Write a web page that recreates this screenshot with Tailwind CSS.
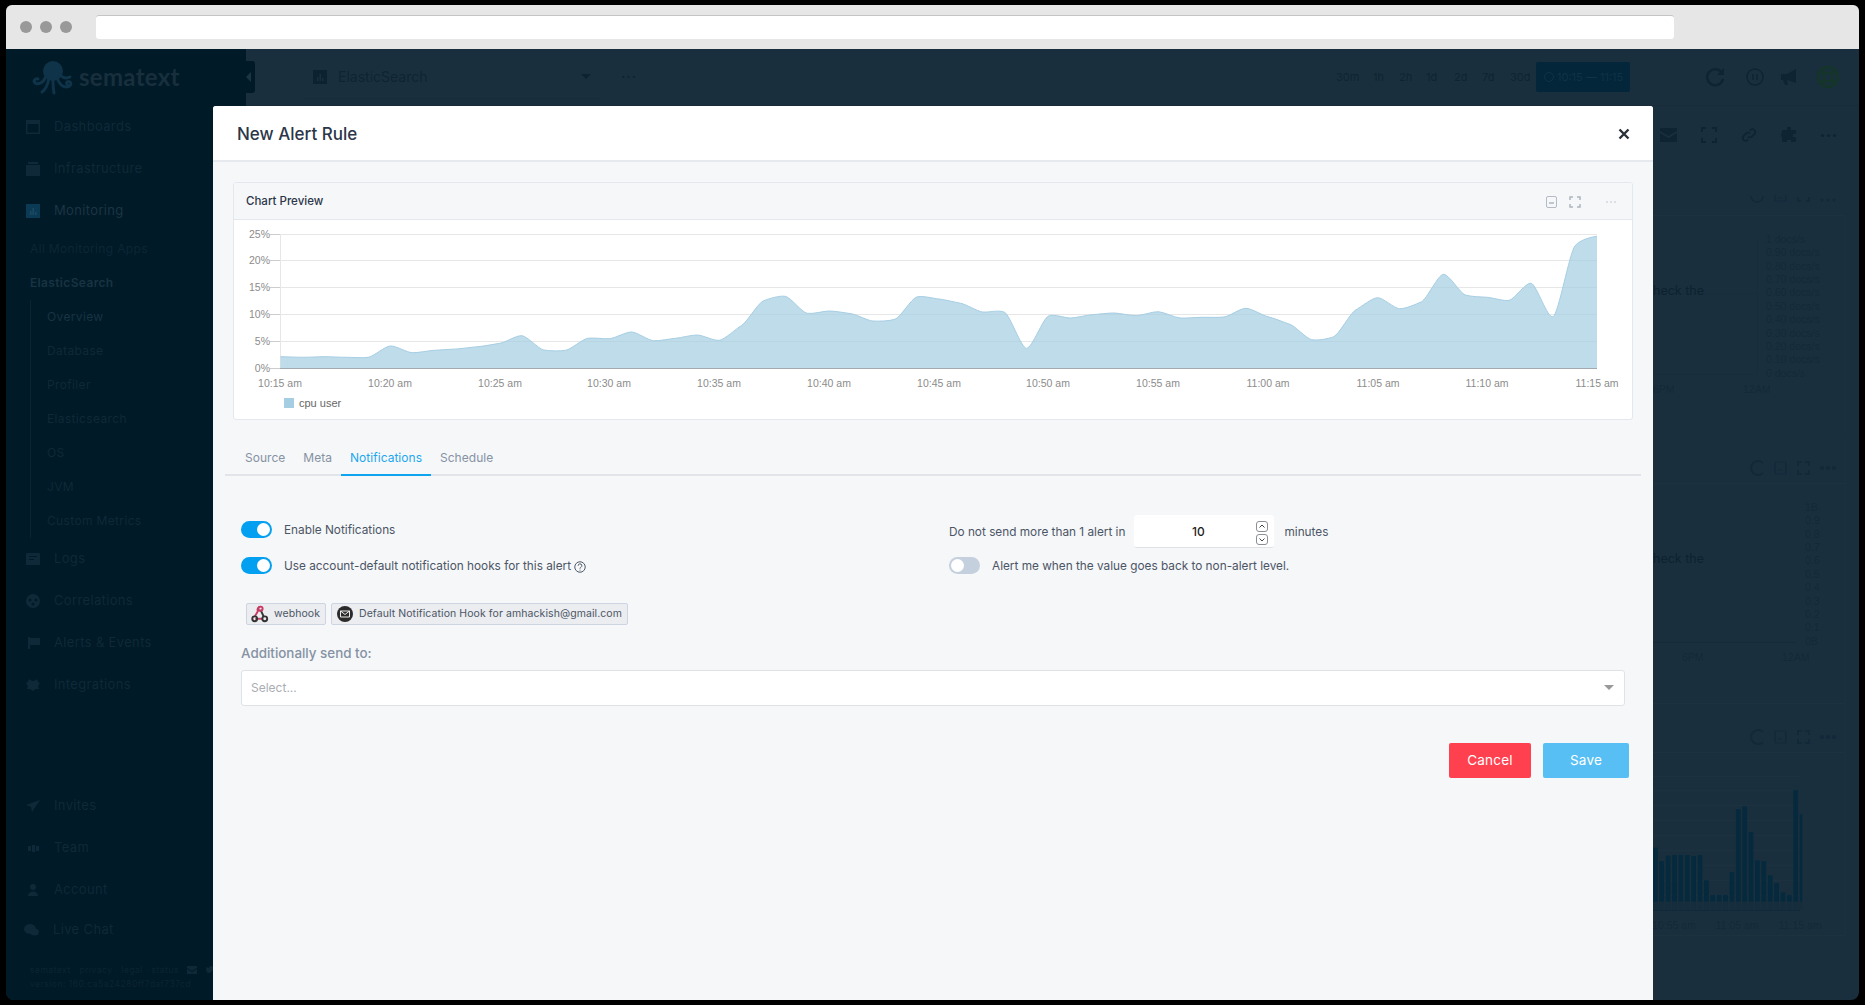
<!DOCTYPE html>
<html lang="en">
<head>
  <meta charset="UTF-8">
  <title>New Alert Rule</title>
  <script src="https://cdn.jsdelivr.net/npm/@tailwindcss/browser@4"></script>
</head>
<body class="h-screen overflow-hidden bg-black pt-[5px] pl-[6px] font-['Inter',sans-serif]">
  <div class="relative flex h-[995px] w-[1853px] flex-col overflow-hidden rounded-t-[6px] rounded-b-[8px] bg-[#1a2f3d]">

    <!-- browser chrome -->
    <div class="flex h-[44px] shrink-0 items-center bg-[#e6e6e6] pl-[14px]">
      <span class="h-[12px] w-[12px] rounded-full bg-[#999999]"></span>
      <span class="ml-[8px] h-[12px] w-[12px] rounded-full bg-[#999999]"></span>
      <span class="ml-[8px] h-[12px] w-[12px] rounded-full bg-[#999999]"></span>
      <div class="ml-[24px] h-[24px] w-[1578px] rounded-[3px] border-t border-[#c4c4c4] bg-white"></div>
    </div>

    <div class="flex flex-1">
      <!-- sidebar, dimmed behind the modal -->
      <aside class="relative flex w-[240px] shrink-0 flex-col bg-[#011a27] text-[13px] tracking-[0.35px] text-[#0f2938]">
        <div class="flex h-[57px] items-center pl-[24px]">
          <svg class="h-[34px] w-[46px]" viewBox="0 0 46 34" fill="none" stroke="#0f3348" stroke-width="3" stroke-linecap="round">
            <ellipse cx="23" cy="10" rx="10" ry="10" fill="#0f3348" stroke="none"/>
            <path d="M16 15c-2 7-8 9-11 7-2-2 0-5 3-4"/>
            <path d="M19 17c-1 6-3 11-7 14"/>
            <path d="M23 18c0 5 0 9 1 14"/>
            <path d="M27 17c2 5 5 9 9 9 4 0 6-3 4-5-2-1-4 0-3 2"/>
            <path d="M30 14c3 3 6 4 10 2"/>
          </svg>
          <span class="ml-[3px] -mt-[2px] font-['Lato',sans-serif] text-[24px] font-bold tracking-[0.3px] text-[#182f3d]">sematext</span>
        </div>
        <span class="absolute top-[12px] left-[240px] flex h-[32px] w-[9px] items-center rounded-r-[3px] bg-[#011a27]">
          <span class="h-0 w-0 border-y-[5px] border-r-[5px] border-y-transparent border-r-[#1c3544]"></span>
        </span>

        <div class="flex h-[42px] items-center pl-[20px]">
          <svg class="mr-[14px] h-[14px] w-[14px]" viewBox="0 0 14 14"><path fill="#0f2938" d="M0 0h14v14H0zM1.500 4v8.500h11V4z"/></svg>Dashboards
        </div>
        <div class="flex h-[42px] items-center pl-[20px]">
          <svg class="mr-[14px] h-[14px] w-[14px]" viewBox="0 0 14 14"><path fill="#0f2938" d="M2 0h10v2H2zM0 3h14v11H0z"/></svg>Infrastructure
        </div>
        <div class="flex h-[42px] items-center pl-[20px] text-[#1a3545]">
          <svg class="mr-[14px] h-[14px] w-[14px]" viewBox="0 0 14 14"><path fill="#0b3a55" d="M0 0h14v14H0z"/><path fill="#1d4a63" d="M4 7h1.500v4H4zM6.500 4H8v7H6.500zM9 8h1.500v3H9z"/></svg>Monitoring
        </div>

        <div class="pl-[24px] text-[12px]">
          <div class="flex h-[34px] items-center text-[#0d2635]">All Monitoring Apps</div>
          <div class="flex h-[34px] items-center font-semibold text-[#183343]">ElasticSearch</div>
          <div class="border-l border-[#0b2432] pl-[16px]">
            <div class="flex h-[34px] items-center text-[#183343]">Overview</div>
            <div class="flex h-[34px] items-center">Database</div>
            <div class="flex h-[34px] items-center">Profiler</div>
            <div class="flex h-[34px] items-center">Elasticsearch</div>
            <div class="flex h-[34px] items-center">OS</div>
            <div class="flex h-[34px] items-center">JVM</div>
            <div class="flex h-[34px] items-center">Custom Metrics</div>
          </div>
        </div>

        <div class="flex h-[42px] items-center pl-[20px]">
          <svg class="mr-[14px] h-[14px] w-[14px]" viewBox="0 0 14 14"><path fill="#0f2938" fill-rule="evenodd" d="M1 1h12a1 1 0 0 1 1 1v10a1 1 0 0 1-1 1H1a1 1 0 0 1-1-1V2a1 1 0 0 1 1-1zM3 4v1h8V4zM3 7v1h5V7z"/></svg>Logs
        </div>
        <div class="flex h-[42px] items-center pl-[20px]">
          <svg class="mr-[14px] h-[14px] w-[14px]" viewBox="0 0 14 14"><path fill="#0f2938" fill-rule="evenodd" d="M7 0a7 7 0 1 1 0 14A7 7 0 0 1 7 0zM4 4.500a1.500 1.500 0 1 0 0 3 1.500 1.500 0 0 0 0-3zM10 4.500a1.500 1.500 0 1 0 0 3 1.500 1.500 0 0 0 0-3zM7 8.500a1.500 1.500 0 1 0 0 3 1.500 1.500 0 0 0 0-3z"/></svg>Correlations
        </div>
        <div class="flex h-[42px] items-center pl-[20px]">
          <svg class="mr-[14px] h-[14px] w-[14px]" viewBox="0 0 14 14"><path fill="#0f2938" d="M2 1h2v1h10v7H4v4H2z"/></svg>Alerts &amp; Events
        </div>
        <div class="flex h-[42px] items-center pl-[20px]">
          <svg class="mr-[14px] h-[14px] w-[14px]" viewBox="0 0 14 14"><path fill="#0f2938" d="M3 1l3 2h2l3-2 1 3 2 1-2 3 1 3-3 0-3 2-3-2-3 0 1-3-2-3 2-1z"/></svg>Integrations
        </div>

        <div class="h-[79px]"></div>

        <div class="flex h-[42px] items-center pl-[20px]">
          <svg class="mr-[14px] h-[14px] w-[14px]" viewBox="0 0 14 14"><path fill="#0f2938" d="M14 1L6 13 5 8 0 6z"/></svg>Invites
        </div>
        <div class="flex h-[42px] items-center pl-[20px]">
          <svg class="mr-[14px] h-[14px] w-[14px]" viewBox="0 0 14 14"><path fill="#0f2938" d="M2 5h3v5H2zM6 4h3v7H6zM10 5h3v5h-3z"/></svg>Team
        </div>
        <div class="flex h-[42px] items-center pl-[20px]">
          <svg class="mr-[14px] h-[14px] w-[14px]" viewBox="0 0 14 14"><circle cx="7" cy="4" r="3" fill="#0f2938"/><path fill="#0f2938" d="M2 13c0-6 10-6 10 0z"/></svg>Account
        </div>
        <div class="flex h-[38px] items-center pl-[18px]">
          <svg class="mr-[14px] h-[14px] w-[15px]" viewBox="0 0 15 14"><ellipse cx="6" cy="6" rx="6" ry="5" fill="#0f2938"/><ellipse cx="10.500" cy="9" rx="4.500" ry="3.500" fill="#0f2938"/></svg>Live Chat
        </div>

        <div class="mt-[14px] pl-[24px] text-[8.5px] leading-[14px] tracking-[0.5px] text-[#0c2534]">
          <div class="flex items-center">sematext · privacy · legal · status
            <svg class="ml-[8px] h-[8px] w-[10px]" viewBox="0 0 10 8"><path fill="#0f2938" d="M0 0h10v2L5 5 0 2zM0 3l5 3 5-3v5H0z"/></svg>
            <svg class="ml-[8px] h-[8px] w-[9px]" viewBox="0 0 9 8"><path fill="#0f2938" d="M0 6c3 2 8 1 8-4l1-1-1 0c-1-2-4-1-4 1C3 2 1 1 1 1c0 2 0 3 1 3L1 4c0 1 1 2 2 2-1 .5-2 .5-3 0z"/></svg>
          </div>
          <div>version: 160:ca5a24280ff7daf737cd</div>
        </div>
      </aside>

      <!-- page behind the modal -->
      <main class="flex min-w-0 flex-1 flex-col">
        <header class="flex h-[57px] shrink-0 items-center border-b border-[#172b38] text-[#0e2433]">
          <div class="ml-[59px] flex h-[44px] w-[295px] items-center border-b border-[#172b38] pl-[8px] text-[13px]">
            <svg class="h-[14px] w-[14px]" viewBox="0 0 14 14"><path fill="#0c2230" d="M0 0h14v14H0z"/><path fill="#1a2f3d" d="M4 7h1.500v4H4zM6.500 4H8v7H6.500zM9 8h1.500v3H9z"/></svg>
            <span class="ml-[11px] text-[14px]">ElasticSearch</span>
            <span class="ml-auto mr-[9px] h-0 w-0 border-x-[5px] border-t-[5px] border-x-transparent border-t-[#0c2230]"></span>
          </div>
          <span class="ml-[21px] text-[13px] font-bold tracking-[1px]">···</span>
          <div class="ml-[699px] flex h-[30px] w-[294px] items-center text-[11px]">
            <span class="w-[37px]">30m</span>
            <span class="w-[26px]">1h</span>
            <span class="w-[27px]">2h</span>
            <span class="w-[28px]">1d</span>
            <span class="w-[28px]">2d</span>
            <span class="w-[28px]">7d</span>
            <span class="w-[26px]">30d</span>
            <span class="flex h-[30px] w-[94px] items-center rounded-[2px] bg-[#03263a] pl-[8px] text-[#0f3347]">
              <span class="mr-[3px] h-[10px] w-[10px] rounded-full border border-[#0f3347]"></span>10:15 — 11:15
            </span>
          </div>
          <svg class="ml-[75px] h-[20px] w-[20px]" viewBox="0 0 20 20" fill="none" stroke="#0e2433" stroke-width="2.500"><path d="M17 6a8 8 0 1 0 1 6"/><path fill="#0e2433" stroke="none" d="M19 1v7h-7z"/></svg>
          <svg class="ml-[21px] h-[18px] w-[18px]" viewBox="0 0 18 18" fill="none" stroke="#0e2433" stroke-width="1.500"><circle cx="9" cy="9" r="8"/><path d="M7 6v6M11 6v6"/></svg>
          <svg class="ml-[15px] h-[18px] w-[18px]" viewBox="0 0 18 18"><path fill="#0e2433" d="M17 1v14L8 12H2V6h6z"/><path fill="#0e2433" d="M4 12h4l1 5H6z"/></svg>
          <svg class="ml-[18px] h-[26px] w-[26px]" viewBox="0 0 26 26" fill="none" stroke="#16352a" stroke-width="2.500"><circle cx="13" cy="13" r="10"/><path d="M3 9h20M3 17h20M9 3v20M17 3v20"/></svg>
        </header>

        <div class="flex h-[54px] shrink-0 items-center justify-end gap-[24px] pr-[22px] pt-[4px]">
          <svg class="h-[14px] w-[17px]" viewBox="0 0 17 14"><path fill="#0e2433" d="M0 0h17v3l-8.500 5L0 3zM0 5l8.500 5L17 5v9H0z"/></svg>
          <svg class="h-[16px] w-[16px]" viewBox="0 0 16 16" fill="none" stroke="#0e2433" stroke-width="2"><path d="M1 5V1h4M11 1h4v4M15 11v4h-4M5 15H1v-4"/></svg>
          <svg class="h-[16px] w-[16px]" viewBox="0 0 16 16" fill="none" stroke="#0e2433" stroke-width="1.800"><path d="M7 9.500a3 3 0 0 0 4 0l3-3a3 3 0 0 0-4-4L9 3.500M9 6.500a3 3 0 0 0-4 0l-3 3a3 3 0 0 0 4 4l1-1"/></svg>
          <svg class="h-[16px] w-[16px]" viewBox="0 0 16 16"><path fill="#0e2433" d="M6 0h4v3h5v4h-3v3h3v5h-5v-2H6v2H1v-5H0V6h1V3h5z"/></svg>
          <span class="flex w-[16px] gap-[3px]">
            <span class="h-[3px] w-[3px] rounded-full bg-[#0e2433]"></span>
            <span class="h-[3px] w-[3px] rounded-full bg-[#0e2433]"></span>
            <span class="h-[3px] w-[3px] rounded-full bg-[#0e2433]"></span>
          </span>
        </div>

        <!-- widget strip on the right, the rest is hidden by the modal -->
        <div class="flex flex-1 flex-col items-end">
          <svg class="block h-[280px] w-[206px] shrink-0" viewBox="1653 160 206 280" font-family="'Liberation Sans',sans-serif" font-size="10.500" fill="#12293a">
            <path d="M1653 215.500H1845M1845 215v220" stroke="#1c323f" fill="none"/>
            <path d="M1757.500 240V374M1653 293.500h104M1653 374.500h104" stroke="#182d3a" fill="none"/>
            <path d="M1751 196a6 6 0 0 0 12 0" stroke="#12293a" stroke-width="1.500" fill="none"/>
            <path d="M1775 195v6h11v-6M1778 198h5" stroke="#12293a" stroke-width="1.200" fill="none"/>
            <path d="M1798 197v4h3M1809 197v4h-3" stroke="#12293a" stroke-width="2" fill="none"/>
            <circle cx="1822" cy="200" r="1.500"/><circle cx="1828" cy="200" r="1.500"/><circle cx="1834" cy="200" r="1.500"/>
            <text x="1766" y="243">1 docs/s</text>
            <text x="1766" y="256">0.90 docs/s</text>
            <text x="1766" y="270">0.80 docs/s</text>
            <text x="1766" y="283">0.70 docs/s</text>
            <text x="1766" y="296">0.60 docs/s</text>
            <text x="1766" y="310">0.50 docs/s</text>
            <text x="1766" y="323">0.40 docs/s</text>
            <text x="1766" y="337">0.30 docs/s</text>
            <text x="1766" y="350">0.20 docs/s</text>
            <text x="1766" y="363">0.10 docs/s</text>
            <text x="1766" y="377">0 docs/s</text>
            <text x="1653" y="393">6PM</text>
            <text x="1743" y="393">12AM</text>
            <text x="1653" y="295" font-family="Inter,sans-serif" font-size="12.500" fill="#0c2230">heck the</text>
          </svg>
          <svg class="block h-[260px] w-[206px] shrink-0" viewBox="1653 440 206 260" font-family="'Liberation Sans',sans-serif" font-size="10.500" fill="#12293a">
            <path d="M1653 483.500H1845M1845 440v260" stroke="#1c323f" fill="none"/>
            <path d="M1653 642.500h142" stroke="#152a37" fill="none"/>
            <path d="M1763 463a7 7 0 1 0 0 10" stroke="#12293a" stroke-width="2" fill="none"/>
            <rect x="1775" y="462" width="11" height="12" rx="1" stroke="#12293a" stroke-width="1.200" fill="none"/>
            <path d="M1778 470h5" stroke="#12293a"/>
            <path d="M1798 466v-4h4M1805 462h4v4M1809 470v4h-4M1802 474h-4v-4" stroke="#12293a" stroke-width="2" fill="none"/>
            <circle cx="1822" cy="468" r="2"/><circle cx="1828" cy="468" r="2"/><circle cx="1834" cy="468" r="2"/>
            <text x="1805" y="511">1B</text>
            <text x="1805" y="524">0.9</text>
            <text x="1805" y="538">0.8</text>
            <text x="1805" y="551">0.7</text>
            <text x="1805" y="564">0.6</text>
            <text x="1805" y="578">0.5</text>
            <text x="1805" y="591">0.4</text>
            <text x="1805" y="605">0.3</text>
            <text x="1805" y="618">0.2</text>
            <text x="1805" y="631">0.1</text>
            <text x="1805" y="645">0B</text>
            <text x="1682" y="661">6PM</text>
            <text x="1782" y="661">12AM</text>
            <text x="1653" y="563" font-family="Inter,sans-serif" font-size="12.500" fill="#0c2230">heck the</text>
          </svg>
          <svg id="bars" class="block h-[300px] w-[206px] shrink-0" viewBox="1653 700 206 300" font-family="'Liberation Sans',sans-serif" font-size="10.500" fill="#12293a">
            <path d="M1653 703.500H1845M1845 700v235M1653 752.500H1845M1653 935.500H1845" stroke="#1c323f" fill="none"/>
            <path d="M1653 776.500h147M1653 790.500h147M1653 805.500h147M1653 820.500h147M1653 835.500h147M1653 850.500h147M1653 865.500h147M1653 880.500h147M1653 895.500h147" stroke="#1c3240" fill="none"/>
            <path d="M1653 910.500h147" stroke="#12293a" fill="none"/>
            <path d="M1763 732a7 7 0 1 0 0 10" stroke="#12293a" stroke-width="2" fill="none"/>
            <rect x="1775" y="731" width="11" height="12" rx="1" stroke="#12293a" stroke-width="1.200" fill="none"/>
            <path d="M1778 739h5" stroke="#12293a"/>
            <path d="M1798 735v-4h4M1805 731h4v4M1809 739v4h-4M1802 743h-4v-4" stroke="#12293a" stroke-width="2" fill="none"/>
            <circle cx="1822" cy="737" r="2"/><circle cx="1828" cy="737" r="2"/><circle cx="1834" cy="737" r="2"/>
            <text x="1674" y="929" text-anchor="middle">10:55 am</text>
            <text x="1737" y="929" text-anchor="middle">11:05 am</text>
            <text x="1800" y="929" text-anchor="middle">11:15 am</text>
          </svg>
        </div>
      </main>
    </div>

    <!-- modal -->
    <div class="absolute top-[101px] left-[207px] flex h-[894px] w-[1440px] flex-col rounded-t-[3px] bg-[#f6f7f9]">
      <div class="flex h-[56px] shrink-0 items-center justify-between rounded-t-[3px] border-b-2 border-[#e6e9ed] bg-white pl-[24px] pr-[23px]">
        <h1 class="mt-[3px] text-[17px] font-medium text-[#2b3648]">New Alert Rule</h1>
        <svg class="mt-[2px] h-[12px] w-[12px]" viewBox="0 0 12 12" fill="none" stroke="#2b3138" stroke-width="2.400"><path d="M1.500 1.500l9 9M10.500 1.500l-9 9"/></svg>
      </div>

      <!-- chart card -->
      <section class="mx-[20px] mt-[20px] h-[238px] shrink-0 overflow-hidden rounded-[3px] border border-[#e4e8ee] bg-white">
        <div class="flex h-[37px] items-center border-b border-[#e4e8ee] bg-[#f6f7f9] pl-[12px] pr-[12px] pt-[2px]">
          <h2 class="text-[11.500px] font-medium text-[#2b3648]">Chart Preview</h2>
          <svg class="ml-auto h-[12px] w-[11px]" viewBox="0 0 11 12" fill="none" stroke="#b4bac6"><rect x="0.500" y="0.500" width="10" height="11" rx="1.500"/><path d="M3 7h5" stroke="#8d95a3"/></svg>
          <svg class="ml-[12px] h-[12px] w-[12px]" viewBox="0 0 12 12" fill="none" stroke="#aeb5c2" stroke-width="1.500"><path d="M1 4V1h3M8 1h3v3M11 8v3H8M4 11H1V8"/></svg>
          <span class="ml-[25px] mr-[4px] flex gap-[1.500px]">
            <span class="h-[2.500px] w-[2.500px] rounded-full bg-[#d2d6dc]"></span>
            <span class="h-[2.500px] w-[2.500px] rounded-full bg-[#d2d6dc]"></span>
            <span class="h-[2.500px] w-[2.500px] rounded-full bg-[#d2d6dc]"></span>
          </span>
        </div>
        <svg id="preview" class="block h-[199px] w-[1398px]" viewBox="234 220 1398 199" font-family="'Liberation Sans',sans-serif" font-size="10.500" fill="#8c8c8c">
          <g id="grid" stroke="#e6e6e6" fill="none">
            <path d="M280 234.500H1597M280 260.500H1597M280 287.500H1597M280 314.500H1597M280 341.500H1597"/>
            <path d="M280.500 234V368"/>
            <path d="M270 234.500h10M270 260.500h10M270 287.500h10M270 314.500h10M270 341.500h10M270 368.500h10" stroke="#cccccc"/>
          </g>
          <path id="area" fill="#a6cee3" fill-opacity="0.72"/>
          <path id="line" fill="none" stroke="#a6cee3" stroke-width="1"/>
          <path d="M280 368.500H1597" stroke="#a3a9b1"/>
          <g text-anchor="end">
            <text x="270" y="238">25%</text>
            <text x="270" y="264">20%</text>
            <text x="270" y="291">15%</text>
            <text x="270" y="318">10%</text>
            <text x="270" y="345">5%</text>
            <text x="270" y="372">0%</text>
          </g>
          <g text-anchor="middle">
            <text x="280" y="387">10:15 am</text>
            <text x="390" y="387">10:20 am</text>
            <text x="500" y="387">10:25 am</text>
            <text x="609" y="387">10:30 am</text>
            <text x="719" y="387">10:35 am</text>
            <text x="829" y="387">10:40 am</text>
            <text x="939" y="387">10:45 am</text>
            <text x="1048" y="387">10:50 am</text>
            <text x="1158" y="387">10:55 am</text>
            <text x="1268" y="387">11:00 am</text>
            <text x="1378" y="387">11:05 am</text>
            <text x="1487" y="387">11:10 am</text>
            <text x="1597" y="387">11:15 am</text>
          </g>
          <rect x="284" y="398" width="10" height="10" fill="#a6cee3"/>
          <text x="299" y="407" font-size="11" fill="#666666">cpu user</text>
        </svg>
      </section>

      <!-- tabs -->
      <nav class="mx-[12px] mt-[21px] flex h-[35px] shrink-0 items-stretch border-b-2 border-[#e1e5ea] pl-[11px] text-[12px] tracking-[0.03px] text-[#8592a3]">
        <span class="flex items-center px-[9px]">Source</span>
        <span class="flex items-center px-[9px]">Meta</span>
        <span class="-mb-[2px] flex items-center border-b-2 border-[#0ea5ee] px-[9px] text-[#1da8ee]">Notifications</span>
        <span class="flex items-center px-[9px]">Schedule</span>
      </nav>

      <!-- notification settings -->
      <div class="ml-[28px] mt-[45px] flex w-[1388px] shrink-0 text-[11.800px] text-[#4b5565]">
        <div class="w-[708px]">
          <div class="flex h-[17px] items-center">
            <span class="flex h-[17px] w-[31px] items-center justify-end rounded-full bg-[#039ff0] pr-[2px]"><span class="h-[13px] w-[13px] rounded-full bg-white"></span></span>
            <span class="ml-[12px] pt-[2px]">Enable Notifications</span>
          </div>
          <div class="mt-[19px] flex h-[17px] items-center">
            <span class="flex h-[17px] w-[31px] items-center justify-end rounded-full bg-[#039ff0] pr-[2px]"><span class="h-[13px] w-[13px] rounded-full bg-white"></span></span>
            <span class="ml-[12px] pt-[2px]">Use account-default notification hooks for this alert</span>
            <svg class="ml-[3px] mt-[2px] h-[12px] w-[12px]" viewBox="0 0 11 11" fill="none" stroke="#4b5565" stroke-width="0.900"><circle cx="5.500" cy="5.500" r="4.800"/><path d="M3.800 4.300a1.700 1.700 0 1 1 2.500 1.500c-.6.300-.8.600-.8 1.200M5.500 8v.8"/></svg>
          </div>
          <div class="ml-[5px] mt-[29px] flex h-[22px] gap-[5px] text-[10.500px] tracking-[0.08px]">
            <span class="flex w-[80px] items-center rounded-[2px] border border-[#cdd5e2] bg-[#ebedf0] pl-[4px]">
              <svg class="h-[18px] w-[18px] shrink-0" viewBox="0 0 17 17" fill="none" stroke-width="1.800">
                <path d="M9 1.500a3 3 0 0 0-2.500 4.300L3.500 11" stroke="#c73a63"/>
                <path d="M4 13h7" stroke="#c73a63"/>
                <path d="M9 4.500l3 6.500" stroke="#333333"/>
                <circle cx="3.500" cy="13" r="2.300" stroke="#333333"/>
                <circle cx="13" cy="13" r="2.300" stroke="#333333"/>
                <circle cx="9" cy="3.500" r="2" stroke="#c73a63"/>
              </svg>
              <span class="ml-[5px]">webhook</span>
            </span>
            <span class="flex w-[297px] items-center rounded-[2px] border border-[#cdd5e2] bg-[#ebedf0] pl-[5px]">
              <svg class="h-[16px] w-[16px] shrink-0" viewBox="0 0 16 16"><circle cx="8" cy="8" r="8" fill="#2a2a2a"/><path d="M3.500 5h9v6h-9zM3.500 5L8 8.500 12.500 5" fill="none" stroke="#ffffff" stroke-width="0.900"/></svg>
              <span class="ml-[6px] whitespace-nowrap">Default Notification Hook for amhackish@gmail.com</span>
            </span>
          </div>
        </div>
        <div class="-mt-[6px]">
          <div class="flex h-[33px] items-center">
            <span class="pt-[2px]">Do not send more than 1 alert in</span>
            <span class="relative ml-[9px] flex h-[33px] w-[140px] items-center justify-center rounded-[3px] border-b border-[#dfe3e8] bg-white pr-[12px] pt-[2px] text-[12px] font-medium text-[#222222]">
              10
              <span class="absolute top-[6px] right-[6px] flex flex-col gap-[2px]">
                <svg class="h-[11px] w-[12px]" viewBox="0 0 12 11" fill="none" stroke="#8b8f96"><rect x="0.500" y="0.500" width="11" height="10" rx="2.500"/><path d="M3.500 6.500L6 4l2.500 2.500" stroke="#444444"/></svg>
                <svg class="h-[11px] w-[12px]" viewBox="0 0 12 11" fill="none" stroke="#8b8f96"><rect x="0.500" y="0.500" width="11" height="10" rx="2.500"/><path d="M3.500 4.500L6 7l2.500-2.500" stroke="#444444"/></svg>
              </span>
            </span>
            <span class="ml-[10px] pt-[2px]">minutes</span>
          </div>
          <div class="mt-[9px] flex h-[17px] items-center">
            <span class="flex h-[17px] w-[31px] items-center rounded-full bg-[#c5d0de] pl-[2px]"><span class="h-[13px] w-[13px] rounded-full bg-white"></span></span>
            <span class="ml-[12px] pt-[2px]">Alert me when the value goes back to non-alert level.</span>
          </div>
        </div>
      </div>

      <label class="ml-[28px] mt-[20px] block h-[16px] shrink-0 text-[13.400px] font-medium leading-[16px] text-[#8592a3]">Additionally send to:</label>
      <div class="ml-[28px] mt-[9px] flex h-[36px] w-[1384px] shrink-0 items-center justify-between rounded-[3px] border border-[#dfe3e8] bg-white pl-[9px] pr-[10px] pb-[1px] text-[12px] text-[#a9adb3]">
        <span>Select...</span>
        <span class="h-0 w-0 border-x-[5px] border-t-[5px] border-x-transparent border-t-[#999999]"></span>
      </div>

      <div class="ml-[28px] mt-[37px] flex w-[1388px] shrink-0 justify-end gap-[12px] text-[13.500px] tracking-[0.2px] text-white">
        <button class="h-[35px] w-[82px] rounded-[2px] bg-[#ff404e]">Cancel</button>
        <button class="h-[35px] w-[86px] rounded-[2px] bg-[#57bff3]">Save</button>
      </div>
    </div>
  </div>

  <script>
    // cpu user series, one value per minute, in screen pixels
    const ys = [356.7,357.3,356.7,357.3,357.3,346,352.7,350.3,349,346.7,343.3,335.7,350,350.3,338.3,338.7,332,340.7,338.3,335,340.3,325.7,301,296.3,313.3,311,313.7,321,319.3,297,299,303.3,312,312.3,348.3,316,318,314.7,313,315.7,311.7,318,317.3,317,308.3,316.7,324.3,339.7,336.7,310,297.7,308.7,301.7,274.3,295,297.3,300.3,283.3,316.7,245.7,236.3];
    const step = (1597 - 280.5) / 60;
    const pts = ys.map((y, i) => [280.5 + i * step, y]);
    let d = `M${pts[0][0]} ${pts[0][1]}`;
    for (let i = 0; i < pts.length - 1; i++) {
      const p0 = pts[i - 1] || pts[i], p1 = pts[i], p2 = pts[i + 1], p3 = pts[i + 2] || p2;
      const k = 1 / 13;
      const c1 = [p1[0] + step / 4, p1[1] + (p2[1] - p0[1]) * k];
      const c2 = [p2[0] - step / 4, p2[1] - (p3[1] - p1[1]) * k];
      d += `C${c1[0].toFixed(1)} ${c1[1].toFixed(1)} ${c2[0].toFixed(1)} ${c2[1].toFixed(1)} ${p2[0].toFixed(1)} ${p2[1]}`;
    }
    document.getElementById('line').setAttribute('d', d);
    document.getElementById('area').setAttribute('d', d + 'L1597 368L280.5 368Z');

    // dimmed bar chart in the background widget
    const tops = [563,603,587,585,585,585,588,585,661,705,705,705,636,447,439,516,601,603,646,669,697,705,390,462];
    const svg = document.getElementById('bars');
    tops.forEach((t, i) => {
      const x = 1653 + i * 6.38;
      const w = i === 23 ? 2.6 : 4.7;
      const rect = document.createElementNS('http://www.w3.org/2000/svg', 'rect');
      rect.setAttribute('x', x);
      rect.setAttribute('y', 660 + t / 3);
      rect.setAttribute('width', w);
      rect.setAttribute('height', (725 - t) / 3);
      rect.setAttribute('fill', '#05293d');
      svg.appendChild(rect);
      const lower = document.createElementNS('http://www.w3.org/2000/svg', 'rect');
      lower.setAttribute('x', x);
      lower.setAttribute('y', 902);
      lower.setAttribute('width', w);
      lower.setAttribute('height', 8);
      lower.setAttribute('fill', '#152d3c');
      svg.appendChild(lower);
    });
  </script>
</body>
</html>
